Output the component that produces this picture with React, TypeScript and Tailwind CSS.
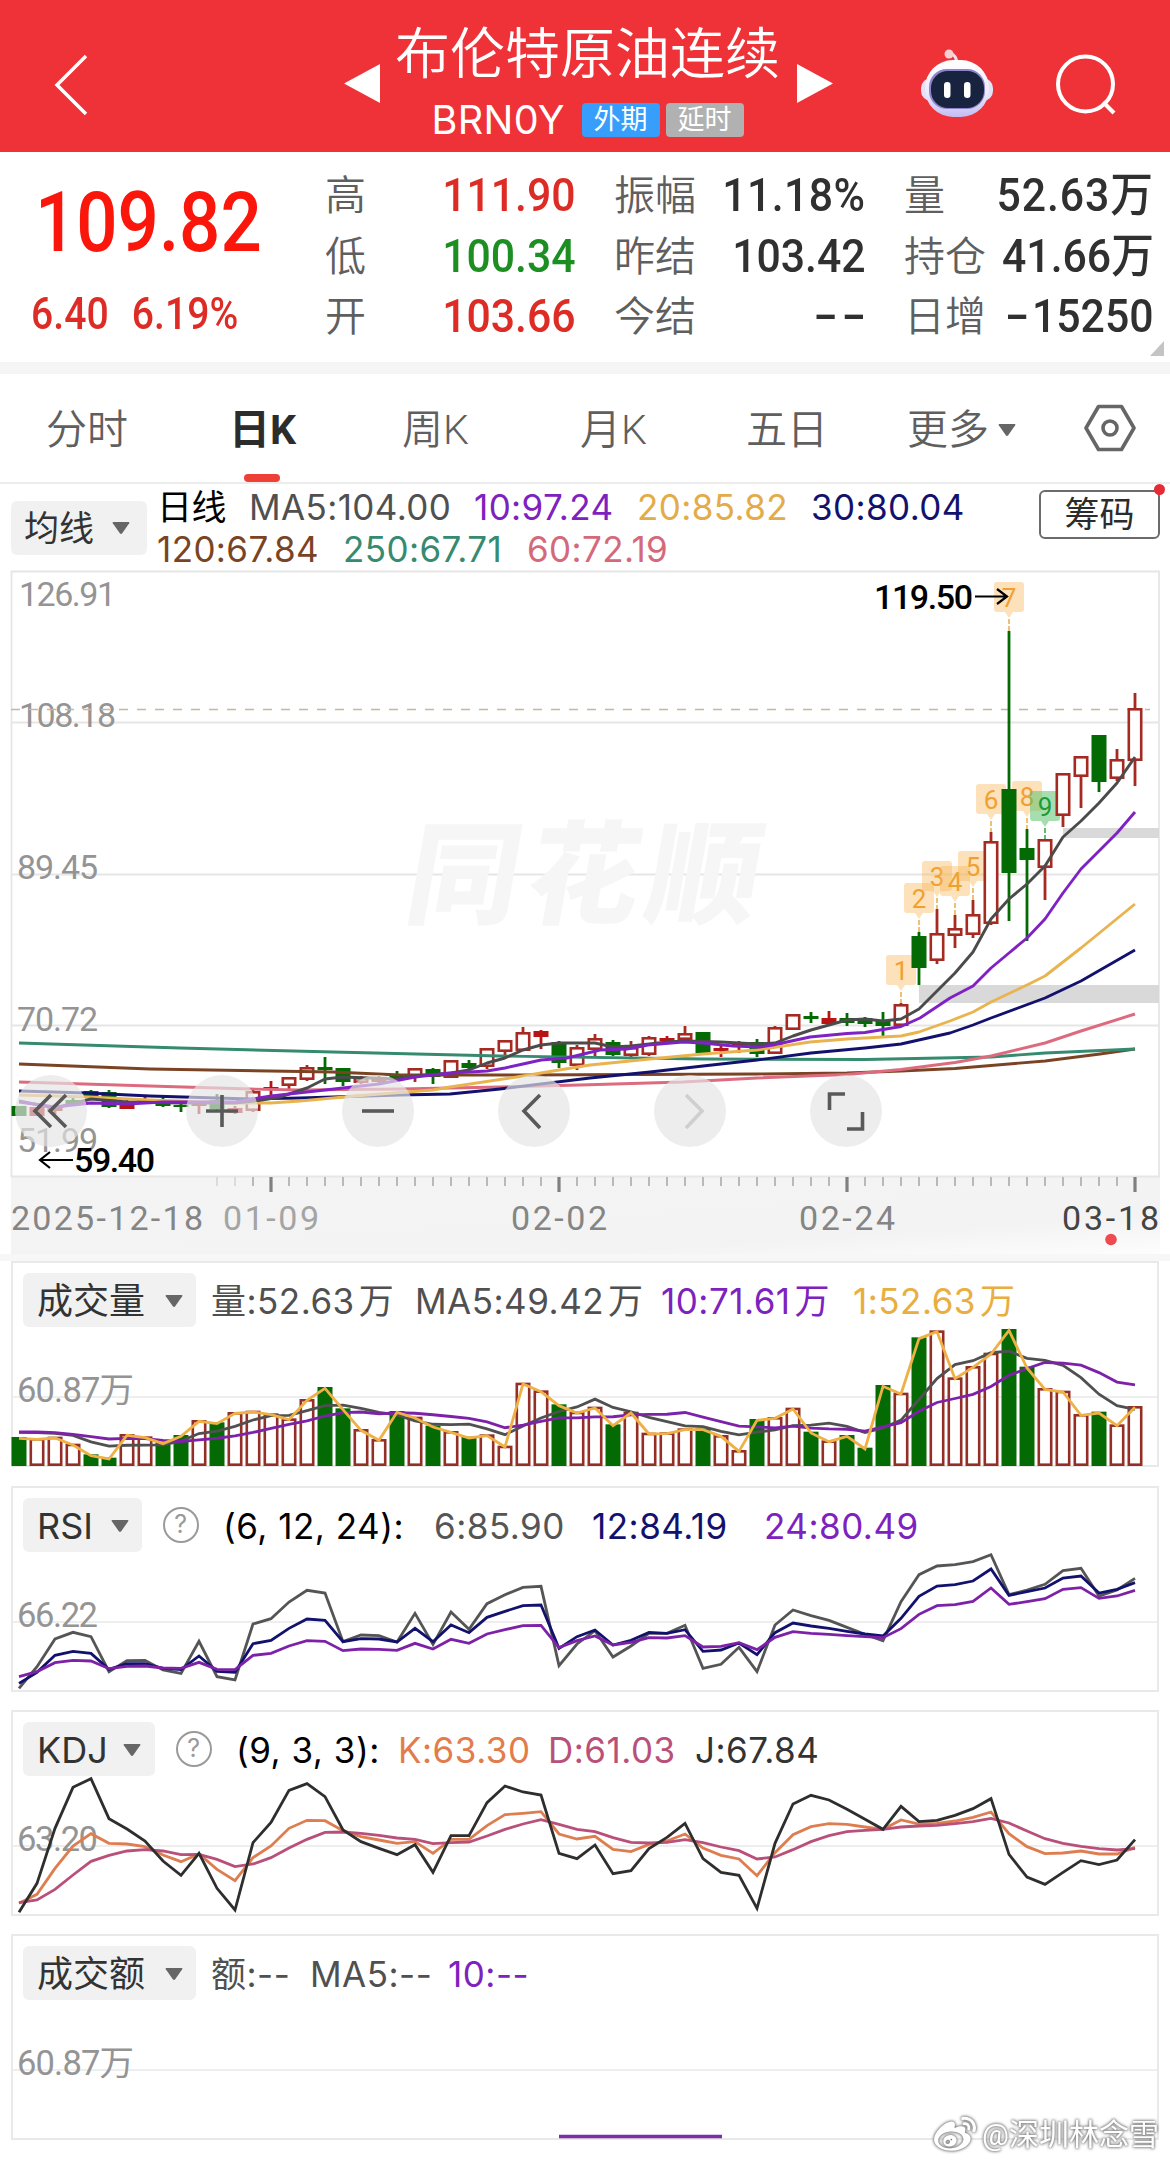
import type { ReactNode } from "react"
import { FaWeibo } from "react-icons/fa"

const BARS = 63
const barX = (i: number) => 19 + 18 * i

const RED = "#a52a22"
const GREEN = "#046a04"

// [kind, high, body top, body bottom, low]; r = hollow, s = solid red, g = green
type Candle = ["r" | "s" | "g", number, number, number, number]

const candles: Candle[] = [
	["g", 1106, 1106, 1116, 1116],
	["s", 1107, 1107, 1116, 1116],
	["s", 1104, 1107, 1111, 1114],
	["g", 1096, 1100, 1104, 1106],
	["g", 1090, 1091, 1097, 1098],
	["g", 1090, 1092, 1107, 1108],
	["s", 1099, 1101, 1109, 1109],
	["s", 1096, 1099, 1103, 1104],
	["g", 1096, 1103, 1106, 1107],
	["g", 1103, 1105, 1107, 1112],
	["s", 1102, 1103, 1106, 1114],
	["g", 1094, 1100, 1109, 1111],
	["s", 1106, 1108, 1113, 1114],
	["r", 1088, 1091, 1111, 1112],
	["s", 1081, 1087, 1090, 1096],
	["r", 1077, 1077, 1086, 1089],
	["r", 1065, 1067, 1080, 1081],
	["g", 1057, 1067, 1070, 1084],
	["g", 1068, 1068, 1082, 1086],
	["r", 1076, 1077, 1083, 1084],
	["r", 1076, 1077, 1082, 1083],
	["g", 1071, 1075, 1078, 1080],
	["r", 1069, 1068, 1077, 1082],
	["g", 1068, 1069, 1077, 1084],
	["r", 1061, 1060, 1078, 1078],
	["g", 1060, 1063, 1068, 1070],
	["r", 1049, 1048, 1067, 1069],
	["r", 1041, 1040, 1052, 1055],
	["r", 1027, 1032, 1051, 1051],
	["s", 1030, 1031, 1037, 1049],
	["g", 1041, 1042, 1063, 1068],
	["r", 1045, 1047, 1066, 1070],
	["r", 1034, 1038, 1050, 1056],
	["g", 1040, 1042, 1055, 1056],
	["r", 1041, 1047, 1056, 1057],
	["r", 1036, 1037, 1055, 1056],
	["s", 1036, 1038, 1041, 1043],
	["r", 1026, 1033, 1040, 1040],
	["g", 1032, 1032, 1053, 1053],
	["s", 1046, 1048, 1051, 1057],
	["s", 1041, 1042, 1047, 1053],
	["g", 1039, 1042, 1054, 1057],
	["r", 1026, 1027, 1054, 1054],
	["r", 1014, 1014, 1030, 1030],
	["g", 1012, 1016, 1019, 1023],
	["s", 1011, 1018, 1024, 1026],
	["g", 1013, 1018, 1023, 1026],
	["g", 1017, 1018, 1024, 1027],
	["g", 1012, 1020, 1026, 1036],
	["r", 1003, 1004, 1026, 1027],
	["g", 932, 936, 968, 985],
	["r", 909, 933, 961, 964],
	["r", 915, 928, 936, 948],
	["r", 900, 914, 935, 938],
	["r", 832, 841, 924, 925],
	["g", 631, 789, 873, 921],
	["g", 829, 848, 860, 941],
	["r", 839, 839, 868, 900],
	["r", 774, 773, 816, 827],
	["r", 756, 756, 777, 808],
	["g", 735, 735, 782, 792],
	["r", 749, 759, 779, 781],
	["r", 693, 708, 761, 786],
]

const maLines: { color: string; points: string }[] = [
	{
		color: "#7a4424",
		points: "19,1064 150,1069 333,1072 400,1075 520,1075 757,1074 847,1073 901,1071 955,1068.5 1045,1061 1100,1054 1135,1049",
	},
	{
		color: "#358a70",
		points: "19,1043 180,1048 333,1052 500,1056 703,1059 865,1059.5 991,1057 1045,1053 1135,1049",
	},
	{
		color: "#dd6b7f",
		points: "19,1082 150,1086 250,1089 300,1090 400,1089 500,1087 580,1085 683,1082 757,1078 847,1074.5 901,1069.5 955,1062.5 991,1056 1045,1043 1081,1031 1135,1014",
	},
	{
		color: "#12126e",
		points: "19,1091 87,1093 150,1096 250,1099 300,1098 400,1095 450,1094 500,1089 590,1078 650,1072 703,1066 757,1060 811,1053 865,1048 901,1044 950,1033 973,1025 991,1018 1045,998 1081,981 1135,950",
	},
	{
		color: "#e9b44f",
		points: "19,1095 87,1097 150,1100 235,1103 271,1103 300,1101 333,1098 367,1095 433,1090 450,1087 517,1077 559,1070 590,1065 650,1059 703,1054 757,1050 810,1042 847,1039 901,1036 919,1032 950,1021 973,1012 991,1002 1027,985 1045,976 1081,948 1135,904",
	},
	{
		color: "#4b4b4b",
		points: "19,1101 55,1108 91,1099 127,1102 181,1103 235,1103 262,1100 280,1097 307,1088 325,1079 343,1077 397,1079 415,1076 451,1073 469,1070 487,1063 505,1058 523,1050 541,1045 559,1043 595,1043 613,1047 631,1046 667,1042 685,1041 721,1042 757,1044 775,1043 793,1036 811,1030 829,1025 847,1020 865,1019 883,1021 901,1019 919,1009 937,991 955,973 973,952 991,919 1009,899 1027,884 1045,866 1063,837 1081,821 1099,803 1117,783 1135,757",
	},
	{
		color: "#7f22c4",
		points: "19,1102 55,1107 91,1103 127,1104 163,1102 235,1102 271,1096 307,1092 343,1088 379,1084 415,1077 451,1073 487,1071 505,1068 523,1064 541,1060 567,1058 600,1050 627,1049 648,1045 683,1042 703,1043 733,1046 760,1047 773,1045 810,1037 847,1033.5 865,1032.5 901,1026.5 920,1018 950,998 973,986 991,968 1009,953 1027,938 1045,919 1063,893 1081,869 1117,833 1135,812",
	},
]

const counts = [
	{ n: 1, x: 901, y: 955, to: 1003 },
	{ n: 2, x: 919, y: 883, to: 932 },
	{ n: 3, x: 937, y: 861, to: 909 },
	{ n: 4, x: 955, y: 866, to: 915 },
	{ n: 5, x: 973, y: 851, to: 900 },
	{ n: 6, x: 991, y: 784, to: 832 },
	{ n: 7, x: 1009, y: 582, to: 631 },
	{ n: 8, x: 1027, y: 781, to: 829 },
	{ n: 9, x: 1045, y: 791, to: 839 },
]

// bar tops, in thirds of a pixel from the top of the panel area
const volumeTops = [
	546, 549, 545, 566, 598, 608, 537, 544, 562, 540, 495, 502, 471, 467, 475, 490, 432, 396, 460, 522, 552, 468, 485,
	512, 528, 545, 538, 572, 383, 406, 448, 470, 455, 508, 470, 533, 532, 520, 520, 540, 585, 492, 486, 458, 530, 556,
	540, 578, 390, 413, 247, 226, 367, 333, 293, 222, 335, 399, 407, 477, 470, 508, 453,
]
const volumeKinds = "grrrggrrggrgrrrrrggrrgrgrgrrrrgrrgrrrrgrrgrrgrgggrgrrrrggrrrgrr"

const rsi6 = [
	625, 560, 477, 457, 470, 575, 542, 541, 570, 580, 484, 590, 600, 432, 416, 366, 331, 339, 485, 465, 467, 486, 400,
	493, 396, 448, 371, 344, 322, 319, 557, 492, 452, 531, 498, 460, 460, 436, 565, 553, 502, 575, 435, 390, 407, 421,
	442, 463, 482, 365, 284, 258, 254, 245, 224, 344, 330, 313, 272, 265, 348, 330, 295,
]
const rsi12 = [
	610, 577, 526, 514, 520, 568, 551, 551, 565, 569, 528, 574, 577, 491, 481, 445, 417, 421, 485, 476, 477, 486, 445,
	485, 435, 458, 412, 394, 377, 375, 505, 470, 450, 495, 481, 457, 460, 449, 514, 510, 489, 524, 458, 429, 438, 445,
	454, 462, 468, 415, 349, 318, 314, 303, 267, 346, 335, 324, 294, 288, 339, 328, 308,
]
const rsi24 = [
	590, 575, 548, 541, 543, 566, 559, 558, 564, 565, 547, 568, 569, 526, 520, 498, 482, 484, 512, 507, 508, 511, 490,
	507, 478, 490, 462, 449, 437, 436, 503, 482, 468, 495, 487, 473, 474, 467, 501, 499, 488, 509, 472, 455, 460, 463,
	467, 470, 473, 446, 403, 377, 374, 364, 324, 373, 365, 356, 328, 323, 355, 348, 331,
]
const kdjK = [
	1270, 1243, 1165, 1098, 1061, 1090, 1092, 1100, 1125, 1145, 1122, 1168, 1202, 1133, 1098, 1045, 1021, 1022, 1052,
	1070, 1080, 1090, 1085, 1120, 1078, 1078, 1037, 1004, 1000, 995, 1062, 1077, 1069, 1108, 1115, 1093, 1083, 1062,
	1104, 1126, 1137, 1187, 1118, 1064, 1040, 1031, 1033, 1041, 1048, 1020, 1032, 1030, 1023, 1012, 996, 1061, 1100,
	1121, 1119, 1113, 1122, 1122, 1102,
]
const kdjD = [
	1268, 1260, 1228, 1185, 1144, 1126, 1113, 1109, 1113, 1124, 1123, 1138, 1160, 1152, 1133, 1104, 1078, 1057, 1056,
	1060, 1066, 1074, 1078, 1091, 1088, 1086, 1068, 1048, 1032, 1019, 1033, 1048, 1055, 1073, 1087, 1089, 1087, 1079,
	1088, 1101, 1112, 1137, 1131, 1109, 1085, 1067, 1055, 1051, 1048, 1041, 1038, 1036, 1031, 1025, 1015, 1029, 1053,
	1076, 1090, 1099, 1106, 1110, 1106,
]
const kdjJ = [
	1297, 1210, 1045, 922, 896, 1016, 1047, 1083, 1143, 1186, 1120, 1225, 1290, 1088, 1027, 931, 911, 950, 1050, 1085,
	1105, 1124, 1094, 1177, 1067, 1067, 968, 918, 936, 945, 1120, 1136, 1095, 1181, 1172, 1106, 1072, 1030, 1136, 1177,
	1186, 1285, 1090, 972, 946, 960, 988, 1018, 1048, 979, 1025, 1021, 1006, 986, 956, 1123, 1191, 1213, 1177, 1142,
	1154, 1140, 1079,
]

function average(values: number[], n: number, head: number[]) {
	return values.map((_, i) =>
		i < n - 1 ? head[i] : values.slice(i - n + 1, i + 1).reduce((a, b) => a + b, 0) / n,
	)
}

function Series({ values, color, base }: { values: number[]; color: string; base: number }) {
	const points = values.map((v, i) => `${barX(i)},${base + v / 3}`).join(" ")
	return <polyline points={points} fill="none" stroke={color} strokeWidth="2.8" />
}

function Caret({ className = "" }: { className?: string }) {
	return (
		<svg className={className} width="20" height="14" viewBox="0 0 20 14">
			<path d="M2.5 1h15q1.5 0 .7 1.3l-7 10q-1.2 1.4-2.4 0l-7-10Q1 1 2.5 1z" fill="#666" />
		</svg>
	)
}

function Header() {
	return (
		<header className="flex h-[152px] bg-[#ee3237] text-white">
			<svg className="mt-[53px] ml-[52px] shrink-0" width="38" height="64" viewBox="0 0 38 64">
				<path d="M34 3 5 32l29 29" fill="none" stroke="#fff" strokeWidth="3.5" />
			</svg>
			<svg className="mt-[64px] ml-[254px] shrink-0" width="36" height="39" viewBox="0 0 36 39">
				<path d="M36 0v39L0 19.500z" fill="#fff" />
			</svg>
			<div className="mt-[22px] flex w-[418px] shrink-0 flex-col items-center">
				<h1 className="-ml-[3px] text-[55px] leading-[64px] font-[350] whitespace-nowrap">布伦特原油连续</h1>
				<div className="mt-[9px] -ml-[3px] flex items-center">
					<span className="w-[150px] font-[Inter] text-[39.5px] leading-[50px] tracking-[0.4px]">BRN0Y</span>
					<span className="h-[34px] w-[78px] rounded-[4px] bg-[#379ffb] text-center text-[27px] leading-[35px]">外期</span>
					<span className="ml-[6px] h-[34px] w-[78px] rounded-[4px] bg-[#b1b1b1] text-center text-[27px] leading-[35px]">
						延时
					</span>
				</div>
			</div>
			<svg className="mt-[64px] -ml-px shrink-0" width="36" height="39" viewBox="0 0 36 39">
				<path d="M0 0v39L36 19.500z" fill="#fff" />
			</svg>
			<Robot />
			<svg className="mt-[53px] ml-[60px] shrink-0" width="64" height="64" viewBox="0 0 64 64">
				<circle cx="31.500" cy="31" r="27.500" fill="none" stroke="#fff" strokeWidth="4" />
				<path d="m49 49 11 11" stroke="#fff" strokeWidth="4" />
			</svg>
		</header>
	)
}

function Robot() {
	return (
		<svg className="mt-[49px] ml-[87px] shrink-0" width="74" height="70" viewBox="0 0 74 70">
			<defs>
				<linearGradient id="shell" x1="0" y1="0" x2="0" y2="1">
					<stop offset="0" stopColor="#fff" />
					<stop offset=".6" stopColor="#ece8fb" />
					<stop offset="1" stopColor="#c3bdf3" />
				</linearGradient>
			</defs>
			<path d="M37 14q-1-8-6-9" fill="none" stroke="#f3dcea" strokeWidth="3" />
			<circle cx="29" cy="5" r="4.500" fill="#f9cfd4" />
			<rect x="1" y="29" width="72" height="23" rx="10" fill="#e4e0f6" />
			<rect x="5" y="11" width="64" height="57" rx="28" fill="url(#shell)" />
			<rect x="9" y="20" width="56" height="40" rx="18" fill="#8d83c9" />
			<rect x="11" y="22" width="53" height="37" rx="17" fill="#17233f" />
			<rect x="24" y="33" width="6.500" height="16" rx="3.200" fill="#fff" />
			<rect x="44" y="33" width="6.500" height="16" rx="3.200" fill="#fff" />
		</svg>
	)
}

function Quote({ label, value, color = "text-[#303030]" }: { label: string; value: ReactNode; color?: string }) {
	return (
		<div className="flex h-[60.5px] items-center justify-between">
			<span className="pt-px text-[41px] font-[350] text-[#5f5f5f]">{label}</span>
			<span className={`mb-[3px] origin-right scale-x-[.91] text-[47px] font-medium whitespace-nowrap ${color}`}>{value}</span>
		</div>
	)
}

function Dash() {
	return <span className="inline-block origin-right -translate-y-[1px] scale-x-[1.65]">-</span>
}

function Quotes() {
	return (
		<section className="relative flex h-[210px] pt-[14px] leading-none">
			<div className="w-[325px] shrink-0 pt-[15px] pl-[31px]">
				<div className="h-[84px] w-[270px] origin-left translate-x-[4px] scale-x-[.865] text-[84px] leading-[84px] font-medium text-[#fb160c]">
					109.82
				</div>
				<div className="mt-[27px] flex w-[270px] origin-left scale-x-[.89] gap-[26px] text-[44px] font-medium text-[#dd2c25]">
					<span>6.40</span>
					<span>6.19%</span>
				</div>
			</div>
			<div className="w-[251px] shrink-0">
				<Quote label="高" value="111.90" color="text-[#dd2c25]" />
				<Quote label="低" value="100.34" color="text-[#1d8f22]" />
				<Quote label="开" value="103.66" color="text-[#dd2c25]" />
			</div>
			<div className="ml-[38px] w-[252px] shrink-0">
				<Quote label="振幅" value={<span className="tracking-[0.5px]">11.18%</span>} />
				<Quote label="昨结" value="103.42" />
				<Quote
					label="今结"
					value={
						<span className="flex gap-[15px]">
							<Dash />
							<Dash />
						</span>
					}
				/>
			</div>
			<div className="ml-[38px] w-[250px] shrink-0">
				<Quote label="量" value={<span className="tracking-[1px]">52.63万</span>} />
				<Quote label="持仓" value="41.66万" />
				<Quote
					label="日增"
					value={
						<>
							<Dash />
							<span className="ml-[3px]">15250</span>
						</>
					}
				/>
			</div>
			<svg className="absolute right-[6px] bottom-[6px]" width="14" height="15" viewBox="0 0 14 15">
				<path d="M14 0v15H0z" fill="#c4c4c4" />
			</svg>
		</section>
	)
}

function Tabs() {
	return (
		<nav className="flex h-[110px] border-b-2 border-[#ececec] pt-[27px] text-[41px] leading-[58px] font-[350] text-[#5f5f5f]">
			<span className="ml-[46px] w-[183px]">分时</span>
			<span className="flex w-[173px] flex-col font-bold text-[#2c2c2c]">
				日K
				<span className="mt-[15px] ml-[15px] h-[9px] w-[36px] rounded-full bg-[#ee4036]" />
			</span>
			<span className="w-[178px]">周K</span>
			<span className="w-[166px]">月K</span>
			<span className="w-[161px]">五日</span>
			<span className="flex w-[177px] items-center self-start">
				更多
				<Caret className="ml-[8px]" />
			</span>
			<svg className="mt-[3px] shrink-0" width="52" height="48" viewBox="0 0 52 48">
				<path d="M14.500 2.500h23L50 24 37.500 45.500h-23L2 24z" fill="none" stroke="#666" strokeWidth="3.600" strokeLinejoin="round" />
				<circle cx="26" cy="24" r="7" fill="none" stroke="#666" strokeWidth="3.600" />
			</svg>
		</nav>
	)
}

function AverageLegend() {
	return (
		<section className="flex h-[86px] font-[Inter,'Noto_Sans_CJK_SC'] text-[35px] whitespace-nowrap">
			<button className="mt-[17px] ml-[11px] flex h-[54px] w-[136px] shrink-0 items-center rounded-[6px] bg-[#f1f1f1] pl-[13px] text-[#333]">
				均线
				<Caret className="ml-[17px]" />
			</button>
			<div className="ml-[10px] w-[873px] shrink-0 pt-[2px] leading-[42px] tracking-[0.4px]">
				<div className="flex">
					<span className="w-[92px] tracking-[-0.5px] text-black">日线</span>
					<span className="w-[225px] text-[#505050]">MA5:104.00</span>
					<span className="w-[163px] text-[#7d22be]">10:97.24</span>
					<span className="w-[174px] text-[#e3ac49]">20:85.82</span>
					<span className="text-[#12126e]">30:80.04</span>
				</div>
				<div className="flex">
					<span className="w-[186px] text-[#7a4424]">120:67.84</span>
					<span className="w-[184px] text-[#358a70]">250:67.71</span>
					<span className="text-[#d5697c]">60:72.19</span>
				</div>
			</div>
			<div className="relative mt-[6px] ml-[9px] h-[49px] w-[121px] rounded-[6px] border-2 border-[#6b6b6b] text-center text-[35px] leading-[44px] text-[#2c2c2c]">
				筹码
				<span className="absolute -top-[8px] -right-[7px] size-[11px] rounded-full bg-[#e62b35]" />
			</div>
		</section>
	)
}

function CandleShape({ candle, x }: { candle: Candle; x: number }) {
	const [kind, high, top, bottom, low] = candle
	const color = kind === "g" ? GREEN : kind === "s" ? "#b81414" : RED
	return (
		<g>
			<path d={`M${x} ${high}V${top}M${x} ${bottom}V${low}`} stroke={color} strokeWidth="2.8" />
			{kind === "r" ? (
				<rect x={x - 6.2} y={top + 1.3} width="12.4" height={bottom - top - 2.6} fill="#fff" stroke={color} strokeWidth="2.6" />
			) : (
				<rect x={x - 7.5} y={top} width="15" height={bottom - top} fill={color} />
			)}
		</g>
	)
}

function PriceChart() {
	return (
		<section className="relative h-[684px]">
			<svg className="block font-[Roboto]" width="1170" height="684" viewBox="0 570 1170 684">
				<defs>
					<linearGradient id="axis" x1="0" y1="0" x2="1" y2="1">
						<stop offset="0" stopColor="#f4f4f4" />
						<stop offset=".75" stopColor="#f3f3f3" />
						<stop offset="1" stopColor="#fdfdfd" />
					</linearGradient>
				</defs>
				<rect x="11" y="1176" width="1149" height="78" fill="url(#axis)" />
				<path d="M11.500 571.500H1159V1176.500H11.500zM11 722.500H1159M11 874.500H1159M11 1025.500H1159" fill="none" stroke="#e6e6e6" strokeWidth="1.800" />
				<text
					x="0"
					y="0"
					transform="translate(402 915) skewX(-10)"
					textLength="352"
					className="fill-[#f6f6f6] font-['Noto_Sans_CJK_SC'] text-[112px] font-black"
				>
					同花顺
				</text>
				<rect x="919" y="985" width="240" height="18" fill="#d9d9d9" />
				<rect x="1063" y="828" width="96" height="10" fill="#d9d9d9" />
				<g className="fill-[#949494] text-[34px]">
					<text x="19" y="606" textLength="97">126.91</text>
					<text x="19" y="727" textLength="97">108.18</text>
					<text x="17" y="879" textLength="81">89.45</text>
					<text x="17" y="1031" textLength="81">70.72</text>
					<text x="17" y="1152" textLength="81">51.99</text>
				</g>
				<path d="M11 709.500H1150" stroke="#c8b79a" strokeWidth="1.600" strokeDasharray="9 9" />
				{counts.map(({ n, x, y, to }) => {
					const green = n === 9
					return (
						<g key={n}>
							<path
								d={`M${x - 12} ${y}h24q3 0 3 3v24q0 3-3 3h-8l-4 6-4-6h-8q-3 0-3-3v-24q0-3 3-3z`}
								fill={green ? "#57c068" : "#f9b75b"}
								fillOpacity={green ? 0.52 : 0.42}
							/>
							<path d={`M${x} ${y + 37}V${to}`} stroke={green ? "#3fa84e" : "#e6b450"} strokeWidth="1.600" strokeDasharray="5 2" />
							<text x={x} y={y + 25} textAnchor="middle" fill={green ? "#1f9c35" : "#f0a030"} className="text-[26px]">
								{n}
							</text>
						</g>
					)
				})}
				{candles.map((candle, i) => (
					<CandleShape key={i} candle={candle} x={barX(i)} />
				))}
				{maLines.map(({ color, points }) => (
					<polyline key={color} points={points} fill="none" stroke={color} strokeWidth="2.900" strokeLinejoin="round" />
				))}
				<g className="text-[34px] font-medium">
					<text x="874" y="609" textLength="99">119.50</text>
					<text x="74" y="1172" textLength="81">59.40</text>
				</g>
				<path d="M975 596.500h32m-10-7.500 10 7.500-10 7.500M73 1160H41m9-8-10 8 10 8" fill="none" stroke="#000" strokeWidth="2.200" />
				{Array.from({ length: BARS - 11 }, (_, k) => k + 11).map((i) =>
					(i - 14) % 16 === 0 ? (
						<path key={i} d={`M${barX(i)} 1177v15`} stroke="#808080" strokeWidth="3.200" />
					) : (
						<path key={i} d={`M${barX(i)} 1177v9`} stroke="#b9b9b9" strokeWidth="2" opacity={i < 13 ? 0.4 : 1} />
					),
				)}
				<g className="fill-[#858585] text-[34px]">
					<text x="11" y="1230" textLength="192">2025-12-18</text>
					<text x="223" y="1230" textLength="96" className="fill-[#a4a4a4]">
						01-09
					</text>
					<text x="511" y="1230" textLength="96">02-02</text>
					<text x="799" y="1230" textLength="96">02-24</text>
					<text x="1062" y="1230" textLength="97" className="fill-[#444]">
						03-18
					</text>
				</g>
				<circle cx="1111" cy="1239.500" r="5.800" fill="#ee4a50" />
			</svg>
			<ChartControls />
		</section>
	)
}

function ControlButton({ path, className, muted }: { path: string; className: string; muted?: boolean }) {
	return (
		<button className={`size-[72px] shrink-0 rounded-full bg-[rgba(228,228,228,.68)] ${className}`}>
			<svg width="72" height="72" viewBox="0 0 72 72">
				<path d={path} fill="none" stroke={muted ? "#cfcfcf" : "#595959"} strokeWidth="3.6" />
			</svg>
		</button>
	)
}

function ChartControls() {
	return (
		<div className="absolute top-[505px] left-[15px] flex">
			<ControlButton className="" path="M36 20 20 36l16 16M51 20 35 36l16 16" />
			<ControlButton className="ml-[99px]" path="M36 20v32M20 36h32" />
			<ControlButton className="ml-[84px]" path="M20 36h32" />
			<ControlButton className="ml-[84px]" path="M42 20 26 36l16 17" />
			<ControlButton className="ml-[84px]" path="M32 20 48 36 32 53" muted />
			<ControlButton className="ml-[84px]" path="M35 19H19.500v16M37 54h15.500V37" />
		</div>
	)
}

function Panel({ className, children, chart }: { className: string; children: ReactNode; chart: ReactNode }) {
	return (
		<section className={`relative mx-[11px] h-[206px] border-2 border-[#e9e9e9] ${className}`}>
			<svg className="absolute -top-[2px] -left-[13px] font-[Roboto,'Noto_Sans_CJK_SC']" width="1170" height="206">
				{chart}
			</svg>
			<div className="relative flex pt-[10px] pl-[10px] font-[Inter,'Noto_Sans_CJK_SC'] text-[35px] leading-[56px] tracking-[0.5px] whitespace-nowrap">
				{children}
			</div>
		</section>
	)
}

function Picker({ label, className }: { label: string; className: string }) {
	return (
		<button
			className={`flex h-[54px] shrink-0 items-center rounded-[6px] bg-[#f1f1f1] pt-px pl-[14px] text-[36px] tracking-normal text-[#333] ${className}`}
		>
			{label}
			<Caret className="ml-auto" />
		</button>
	)
}

function Help() {
	return (
		<span className="mt-[9px] ml-[21px] size-[36px] shrink-0 rounded-full border-[2.5px] border-[#9a9a9a] text-center text-[25px] leading-[31px] text-[#9a9a9a]">
			?
		</span>
	)
}

function GridLine({ y, label, width }: { y: number; label: string; width: number }) {
	return (
		<>
			<path d={`M13 ${y}H1158`} stroke="#e8e8e8" strokeWidth="1.6" />
			<text x="17" y={y + 5} textLength={width} className="fill-[#949494] text-[34.5px]">
				{label}
			</text>
		</>
	)
}

// amount followed by the ten-thousand unit, set slightly apart
function Wan({ children }: { children: string }) {
	return (
		<>
			{children}
			<span className="ml-[4px]">万</span>
		</>
	)
}

function VolumePanel() {
	// panel svg starts at y 1261, data at 1255
	const base = -6
	const ma5 = average(volumeTops, 5, [532, 533, 535, 541])
	const ma10 = average(volumeTops, 10, [531, 531, 533, 538, 545, 552, 550, 551, 556])
	return (
		<Panel
			className=""
			chart={
				<>
					<GridLine y={136} label="60.87万" width={117} />
					{volumeTops.map((v, i) => {
						const x = barX(i)
						const y = base + v / 3
						return volumeKinds[i] === "g" ? (
							<rect key={i} x={x - 7.5} y={y} width="15" height={205 - y} fill={GREEN} />
						) : (
							<rect key={i} x={x - 6.2} y={y + 1.3} width="12.4" height={202.4 - y} fill="#fff" stroke="#932f27" strokeWidth="2.6" />
						)
					})}
					<Series values={ma5} color="#505050" base={base} />
					<Series values={ma10} color="#7d22a8" base={base} />
					<Series values={volumeTops.map((v) => v + 4)} color="#efb045" base={base} />
				</>
			}
		>
			<Picker label="成交量" className="w-[173px] pr-[12px]" />
			<span className="ml-[15px] w-[204px] text-[#505050]">
				<Wan>量:52.63</Wan>
			</span>
			<span className="w-[246px] text-[#505050]">
				<Wan>MA5:49.42</Wan>
			</span>
			<span className="w-[192px] text-[#7d22be]">
				<Wan>10:71.61</Wan>
			</span>
			<span className="text-[#e9ae40]">
				<Wan>1:52.63</Wan>
			</span>
		</Panel>
	)
}

function RsiPanel() {
	return (
		<Panel
			className="mt-[19px]"
			chart={
				<>
					<GridLine y={136} label="66.22" width={81} />
					<Series values={rsi6} color="#555" base={-6} />
					<Series values={rsi12} color="#12126e" base={-6} />
					<Series values={rsi24} color="#7d22a8" base={-6} />
				</>
			}
		>
			<Picker label="RSI" className="w-[119px] pr-[12px]" />
			<Help />
			<span className="ml-[24px] w-[211px] text-black">(6, 12, 24):</span>
			<span className="w-[158px] text-[#555]">6:85.90</span>
			<span className="w-[172px] text-[#12126e]">12:84.19</span>
			<span className="text-[#7d22be]">24:80.49</span>
		</Panel>
	)
}

function KdjPanel() {
	return (
		<Panel
			className="mt-[18px]"
			chart={
				<>
					<GridLine y={136} label="63.20" width={81} />
					<Series values={kdjK} color="#dd7d50" base={-230} />
					<Series values={kdjD} color="#b9507a" base={-230} />
					<Series values={kdjJ} color="#2e2e2e" base={-230} />
				</>
			}
		>
			<Picker label="KDJ" className="w-[132px] pr-[13px]" />
			<Help />
			<span className="ml-[24px] w-[162px] text-black">(9, 3, 3):</span>
			<span className="w-[150px] text-[#e37c4c]">K:63.30</span>
			<span className="w-[147px] text-[#b9507a]">D:61.03</span>
			<span className="text-[#333]">J:67.84</span>
		</Panel>
	)
}

function AmountPanel() {
	return (
		<Panel
			className="mt-[18px]"
			chart={
				<>
					<GridLine y={136} label="60.87万" width={117} />
					<path d="M559 202.500H722" stroke="#7d2fa8" strokeWidth="3.500" />
				</>
			}
		>
			<Picker label="成交额" className="w-[173px] pr-[12px]" />
			<span className="ml-[15px] w-[99px] text-[#505050]">额:--</span>
			<span className="w-[138px] text-[#505050]">MA5:--</span>
			<span className="text-[#7d22be]">10:--</span>
		</Panel>
	)
}

export default function App() {
	return (
		<main className="relative h-[2164px] w-[1170px] overflow-hidden bg-white font-[Roboto,'Noto_Sans_CJK_SC',sans-serif]">
			<Header />
			<Quotes />
			<div className="h-[12px] bg-[#f5f5f5]" />
			<Tabs />
			<AverageLegend />
			<PriceChart />
			<div className="h-[7px] bg-[#f7f7f7]" />
			<VolumePanel />
			<RsiPanel />
			<KdjPanel />
			<AmountPanel />
			<div className="absolute right-[11px] bottom-[8px] flex items-center text-[30px] leading-[40px] text-white [filter:drop-shadow(0_0_1.5px_#777)_drop-shadow(0_0_1px_#999)]">
				<FaWeibo className="mr-[6px] size-[42px]" />
				@深圳林念雪
			</div>
		</main>
	)
}
